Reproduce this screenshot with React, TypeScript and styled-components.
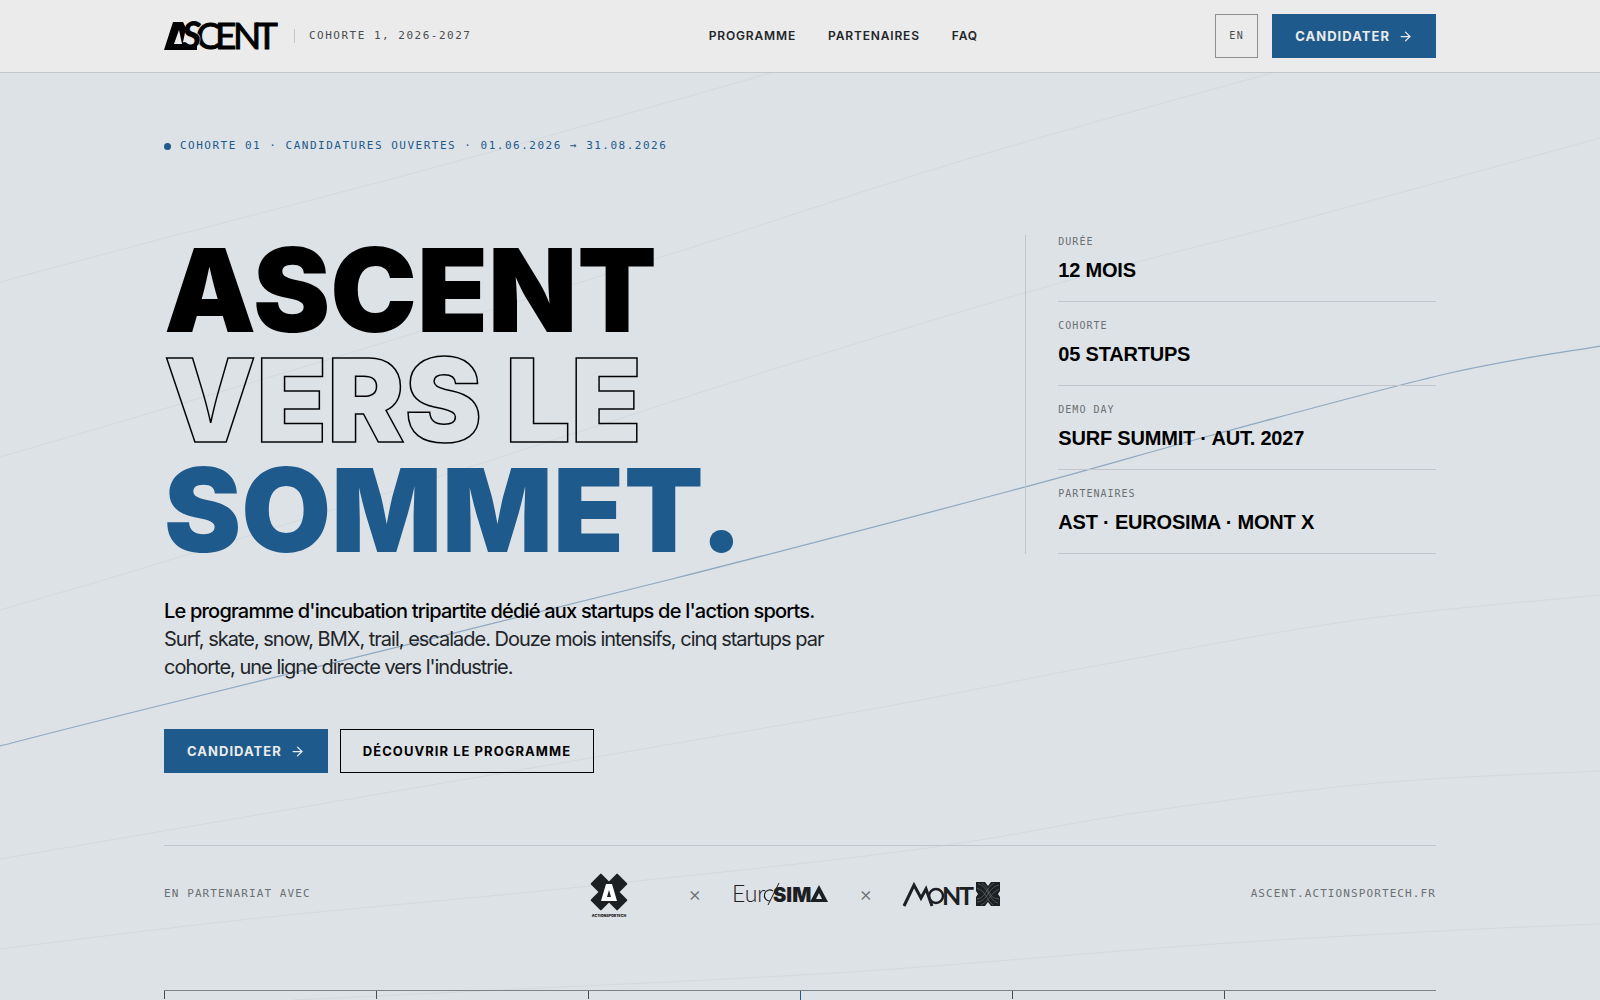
import React from "react";
import styled, { createGlobalStyle, css } from "styled-components";
import { ArrowRight } from "lucide-react";

const sans = `Inter, "Liberation Sans", sans-serif`;
const display = `"Liberation Sans", Arial, sans-serif`;
const mono = `"DejaVu Sans Mono", monospace`;

const ink = "#1d2022";
const accent = "#1e5a8c";
const rule = "#c0c6cb";
const muted = "#6b7073";

const Global = createGlobalStyle`
  *, *::before, *::after { box-sizing: border-box; }
  body { margin: 0; background: #dde2e6; color: #000; font-family: ${sans}; }
  a { color: inherit; text-decoration: none; }
  svg { display: block; }
`;

const Page = styled.div`
  min-height: 100vh;
  background: #dde2e6;
`;
const Container = styled.div`
  width: 100%;
  max-width: 1400px;
  margin: 0 auto;
  padding: 0 64px;
`;
const Header = styled.header`
  background: #ebebeb;
  border-bottom: 1px solid #c3c8cd;
`;
const HeaderRow = styled(Container)`
  display: flex;
  justify-content: space-between;
  align-items: center;
  height: 72px;
`;
const Brand = styled.div`
  display: flex;
  align-items: center;
  gap: 16px;
`;
const Logo = styled.svg`
  flex: none;
  overflow: visible;
`;
const Cohort = styled.span`
  padding-left: 14px;
  border-left: 1px solid #c3c8cd;
  font: 11px/14px ${mono};
  letter-spacing: 1.5px;
  color: #4a4d50;
`;
const Nav = styled.nav`
  display: flex;
  gap: 32px;
  font: 600 12px/20px ${sans};
  letter-spacing: 0.07em;
  color: #222529;
`;
const Actions = styled.div`
  display: flex;
  gap: 14px;
`;
const LangButton = styled.button`
  width: 43px;
  height: 44px;
  padding: 0;
  border: 1px solid #8c9093;
  background: transparent;
  color: #4a4d50;
  font: 10px/14px ${mono};
  letter-spacing: 1.5px;
`;
const Button = styled.a<{ $outline?: boolean }>`
  display: inline-flex;
  align-items: center;
  gap: 8px;
  height: 44px;
  padding: 0 22px;
  border: 1px solid ${accent};
  background: ${accent};
  color: #ebebeb;
  font: 700 13px/20px ${sans};
  letter-spacing: 0.08em;
  ${(p) => p.$outline && css`
    background: transparent;
    border-color: #000;
    color: #000;
  `}
`;

const Hero = styled.section`
  position: relative;
  overflow: hidden;
`;
const Contours = styled.svg`
  position: absolute;
  inset: 0;
  width: 100%;
  height: 100%;
`;
const HeroBody = styled(Container)`
  position: relative;
`;
const Eyebrow = styled.p`
  display: flex;
  align-items: center;
  gap: 9px;
  margin: 0;
  padding-top: 64px;
  font: 11px/18px ${mono};
  letter-spacing: 1.5px;
  color: ${accent};
  &::before {
    content: "";
    width: 7px;
    height: 7px;
    border-radius: 50%;
    background: ${accent};
  }
`;
const HeroGrid = styled.div`
  display: grid;
  grid-template-columns: 2fr 1fr;
  gap: 40px;
  align-items: start;
  margin-top: 80px;
`;
const Title = styled.h1`
  margin: 0;
  font: 900 116px/110px ${sans};
`;
const TitleLine = styled.span<{ $tone?: "outline" | "accent" }>`
  display: block;
  ${(p) => p.$tone === "outline" && css`
    color: transparent;
    -webkit-text-stroke: 1.5px #000;
  `}
  ${(p) => p.$tone === "accent" && css`color: ${accent};`}
`;
const Lead = styled.p`
  max-width: 680px;
  margin: 32px 0 0;
  font: 400 20px/28px ${sans};
  letter-spacing: -0.05em;
  color: #222529;
  strong {
    font-weight: 500;
    letter-spacing: -0.04em;
    color: #000;
  }
`;
const Ctas = styled.div`
  display: flex;
  gap: 12px;
  margin-top: 48px;
`;
const Facts = styled.dl`
  margin: 0;
  padding-left: 32px;
  border-left: 1px solid ${rule};
`;
const Fact = styled.div`
  padding: 17px 0 18px;
  border-bottom: 1px solid ${rule};
  &:first-child { padding-top: 0; }
`;
const FactLabel = styled.dt`
  font: 10px/14px ${mono};
  letter-spacing: 1px;
  color: ${muted};
`;
const FactValue = styled.dd`
  margin: 8px 0 0;
  font: 700 20px/26px ${display};
  letter-spacing: -0.01em;
`;

const Partners = styled.div`
  display: flex;
  justify-content: space-between;
  align-items: center;
  margin-top: 72px;
  padding-top: 24px;
  border-top: 1px solid ${rule};
`;
const Note = styled.span`
  font: 11px/16px ${mono};
  letter-spacing: 0.1em;
  color: ${muted};
`;
const Logos = styled.div`
  display: flex;
  align-items: center;
  gap: 32px;
`;
const Times = styled.span`
  width: 12px;
  text-align: center;
  font: 300 20px/28px ${sans};
  color: ${muted};
`;

const Timeline = styled.div`
  display: grid;
  grid-template-columns: repeat(6, 1fr);
  height: 16px;
  margin-top: 72px;
  border-top: 1px solid #7d8488;
`;
const Tick = styled.i<{ $active?: boolean }>`
  width: 1px;
  height: ${(p) => (p.$active ? 16 : 8)}px;
  background: ${(p) => (p.$active ? accent : "#4a4d50")};
`;

type Pt = [number, number];
const contours: { points: Pt[]; accent?: boolean }[] = [
  { points: [[0, 209], [150, 169], [410, 101], [587, 52], [770, 0], [940, -52]] },
  { points: [[0, 384], [150, 340], [432, 255], [693, 174], [964, 87], [1272, 0], [1500, -60]] },
  { points: [[0, 537], [150, 493], [460, 397], [790, 291], [1063, 209], [1300, 147], [1600, 65]] },
  { points: [[0, 673], [150, 635], [668, 507], [1010, 418], [1220, 360], [1450, 300], [1600, 273]], accent: true },
  { points: [[0, 786], [344, 727], [850, 640], [1100, 592], [1357, 547], [1600, 522]] },
  { points: [[0, 876], [250, 846], [570, 815], [913, 777], [1143, 739], [1378, 710], [1600, 698]] },
  { points: [[293, 927], [500, 917], [850, 899], [1200, 872], [1460, 857], [1600, 851]] },
];

/** Smooth curve through every point, as cubic segments. */
function toPath(points: Pt[]) {
  let d = `M${points[0][0]} ${points[0][1]}`;
  for (let i = 0; i < points.length - 1; i++) {
    const a = points[Math.max(0, i - 1)];
    const b = points[i];
    const c = points[i + 1];
    const e = points[Math.min(points.length - 1, i + 2)];
    d += `C${b[0] + (c[0] - a[0]) / 6} ${b[1] + (c[1] - a[1]) / 6} ${c[0] - (e[0] - b[0]) / 6} ${c[1] - (e[1] - b[1]) / 6} ${c[0]} ${c[1]}`;
  }
  return d;
}

const AscentLogo = () => (
  <Logo width="114" height="28" viewBox="0 0 114 28" role="img" aria-label="Ascent">
    <g fontFamily="Lato, sans-serif" fontSize="37" fontWeight="400" stroke="#000" strokeWidth="1">
      <text x="32" y="27">C</text>
      <text x="51" y="27">E</text>
      <text x="69" y="27">N</text>
      <text x="92" y="27">T</text>
    </g>
    <text x="18" y="27" fontFamily="Lato, sans-serif" fontSize="37" fontWeight="900" fontStyle="italic" stroke="#ebebeb" strokeWidth="1" paintOrder="stroke">S</text>
    <path d="M0 28 9 0h10l3 6-3 14 6 3h8v5zM15 8l-5 14h8z" fillRule="evenodd" />
  </Logo>
);

const ActionSportechLogo = () => (
  <Logo width="94" height="48" viewBox="0 0 94 48" role="img" aria-label="ActionSportech">
    <g fill={ink} transform="translate(47 22)">
      <rect x="-19" y="-7.500" width="38" height="15" rx="1" transform="rotate(45)" />
      <rect x="-19" y="-7.500" width="38" height="15" rx="1" transform="rotate(-45)" />
    </g>
    <path d="M44 14h6l5 17H39zM47 20l-2 7h4z" fill="#fff" fillRule="evenodd" />
    <text x="47" y="47" textAnchor="middle" fontFamily="Inter, sans-serif" fontSize="3.600" fontWeight="900" fill={ink}>ACTIONSPORTECH</text>
  </Logo>
);

const EurosimaLogo = () => (
  <Logo width="95" height="24" viewBox="0 0 95 24" role="img" aria-label="Eurosima" fill={ink}>
    <text x="0" y="20" fontFamily="Lato, sans-serif" fontSize="23" fontWeight="300">Eur</text>
    <path d="M41 9A5.500 5.500 0 1 0 38 19" fill="none" stroke={ink} strokeWidth="1.200" />
    <path d="M47 1 36 23" stroke={ink} strokeWidth="1" />
    <text x="41" y="20" fontFamily="Inter, sans-serif" fontSize="20" fontWeight="900">SIM</text>
    <path d="m87 3 9 17H78zm0 8-3 6h6z" fillRule="evenodd" />
  </Logo>
);

const MontXLogo = () => (
  <Logo width="96" height="26" viewBox="0 0 96 26" role="img" aria-label="Mont X" fill={ink}>
    <path d="M1 25 11 4l7 13 5-9 6 17" fill="none" stroke={ink} strokeWidth="3" />
    <circle cx="33" cy="15" r="7" fill="none" stroke={ink} strokeWidth="2.500" />
    <g fontFamily="Lato, sans-serif" fontSize="25" fontWeight="700">
      <text x="39" y="24">N</text>
      <text x="56" y="24">T</text>
    </g>
    <path d="M73 1h9l3 4 3-4h9v9l-2 3 2 3v9h-9l-3-4-3 4h-9v-9l2-3-2-3z" />
    <path d="M75 3q5 0 10 9t10 10M79 2q4 2 7 9t10 7M74 7q6 2 9 8t7 9M96 4q-6 1-11 9t-11 8M91 2q-4 2-8 9t-9 7M96 8q-5 2-9 8t-9 8" fill="none" stroke="#7b8085" strokeWidth=".5" />
  </Logo>
);

const Arrow = () => <ArrowRight size={15} strokeWidth={2} aria-hidden />;

const facts = [
  ["DURÉE", "12 MOIS"],
  ["COHORTE", "05 STARTUPS"],
  ["DEMO DAY", "SURF SUMMIT · AUT. 2027"],
  ["PARTENAIRES", "AST · EUROSIMA · MONT X"],
];

export default function App() {
  return (
    <Page>
      <Global />
      <Header>
        <HeaderRow>
          <Brand>
            <AscentLogo />
            <Cohort>COHORTE 1, 2026-2027</Cohort>
          </Brand>
          <Nav>
            <a href="#programme">PROGRAMME</a>
            <a href="#partenaires">PARTENAIRES</a>
            <a href="#faq">FAQ</a>
          </Nav>
          <Actions>
            <LangButton type="button">EN</LangButton>
            <Button href="#candidater">CANDIDATER <Arrow /></Button>
          </Actions>
        </HeaderRow>
      </Header>
      <Hero>
        <Contours viewBox="0 0 1600 1000" preserveAspectRatio="xMidYMin slice" aria-hidden>
          {contours.map((c, i) => (
            <path key={i} d={toPath(c.points)} fill="none" stroke={c.accent ? "#8fa9c2" : "#d4d9dd"} strokeWidth={c.accent ? 1.25 : 1} />
          ))}
        </Contours>
        <HeroBody>
          <Eyebrow>COHORTE 01 · CANDIDATURES OUVERTES · 01.06.2026 → 31.08.2026</Eyebrow>
          <HeroGrid>
            <div>
              <Title>
                <TitleLine>ASCENT</TitleLine>
                <TitleLine $tone="outline">VERS LE</TitleLine>
                <TitleLine $tone="accent">SOMMET.</TitleLine>
              </Title>
              <Lead>
                <strong>Le programme d'incubation tripartite dédié aux startups de l'action sports.</strong>{" "}
                Surf, skate, snow, BMX, trail, escalade. Douze mois intensifs, cinq startups par cohorte, une ligne directe vers l'industrie.
              </Lead>
              <Ctas>
                <Button href="#candidater">CANDIDATER <Arrow /></Button>
                <Button $outline href="#programme">DÉCOUVRIR LE PROGRAMME</Button>
              </Ctas>
            </div>
            <Facts>
              {facts.map(([label, value]) => (
                <Fact key={label}>
                  <FactLabel>{label}</FactLabel>
                  <FactValue>{value}</FactValue>
                </Fact>
              ))}
            </Facts>
          </HeroGrid>
          <Partners>
            <Note>EN PARTENARIAT AVEC</Note>
            <Logos>
              <ActionSportechLogo />
              <Times>×</Times>
              <EurosimaLogo />
              <Times>×</Times>
              <MontXLogo />
            </Logos>
            <Note as="a" href="https://ascent.actionsportech.fr">ASCENT.ACTIONSPORTECH.FR</Note>
          </Partners>
          <Timeline>
            <Tick /><Tick /><Tick /><Tick $active /><Tick /><Tick />
          </Timeline>
        </HeroBody>
      </Hero>
    </Page>
  );
}
